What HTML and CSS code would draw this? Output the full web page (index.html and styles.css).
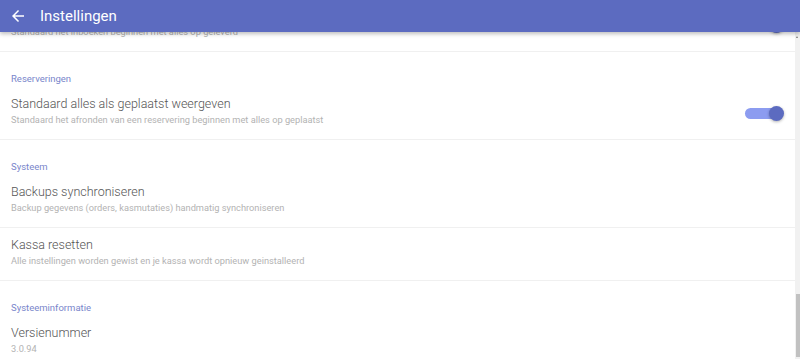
FILE: index.html
```html
<!DOCTYPE html>
<html lang="nl">
  <head>
    <meta charset="utf-8" />
    <link rel="stylesheet" href="styles.css">
    <title>Instellingen</title>
  </head>
  <body>
    <header class="toolbar">
      <svg class="back" viewBox="0 0 24 24" width="18" height="18">
        <path fill="#fff" d="M20 11H7.83l5.59-5.59L12 4l-8 8 8 8 1.41-1.41L7.83 13H20v-2z" />
      </svg>
      <div class="toolbar-title">Instellingen</div>
    </header>

    <div class="page">
      <main class="content" id="content">
        <div class="section">Algemeen</div>
        <div class="item"><div class="text"><div class="title">Taal</div><div class="sub">Nederlands</div></div></div>
        <div class="item"><div class="text"><div class="title">Donkere modus</div><div class="sub">Gebruik een donker thema voor de kassa</div></div><span class="switch"></span></div>
        <div class="item"><div class="text"><div class="title">Geluid bij scannen</div><div class="sub">Speel een geluid af bij het scannen van een product</div></div><span class="switch"></span></div>
        <div class="item"><div class="text"><div class="title">Scherm vergrendelen</div><div class="sub">Vergrendel de kassa na 5 minuten inactiviteit</div></div><span class="switch off"></span></div>

        <div class="section">Kassa</div>
        <div class="item"><div class="text"><div class="title">Bon printen</div><div class="sub">Automatisch een bon printen na elke betaling</div></div><span class="switch"></span></div>
        <div class="item"><div class="text"><div class="title">Standaard betaalmethode</div><div class="sub">Pin</div></div></div>
        <div class="item"><div class="text"><div class="title">Klantenscherm</div><div class="sub">Toon de bestelling op een tweede scherm</div></div><span class="switch off"></span></div>
        <div class="item"><div class="text"><div class="title">Kassalade openen</div><div class="sub">Open de kassalade bij contante betalingen</div></div><span class="switch"></span></div>
        <div class="item"><div class="text"><div class="title">Fooi vragen</div><div class="sub">Vraag de klant om een fooi bij het afrekenen</div></div><span class="switch off"></span></div>

        <div class="section">Printer</div>
        <div class="item"><div class="text"><div class="title">Bonprinter</div><div class="sub">Geen printer gekoppeld</div></div></div>
        <div class="item"><div class="text"><div class="title">Keukenprinter</div><div class="sub">Geen printer gekoppeld</div></div></div>
        <div class="item"><div class="text"><div class="title">Logo op bon</div><div class="sub">Print het logo bovenaan de bon</div></div><span class="switch"></span></div>
        <div class="item"><div class="text"><div class="title">Aantal kopie&euml;n</div><div class="sub">1</div></div></div>

        <div class="section">Betalingen</div>
        <div class="item"><div class="text"><div class="title">Pinterminal</div><div class="sub">Koppel een pinterminal aan de kassa</div></div></div>
        <div class="item"><div class="text"><div class="title">Contant afronden</div><div class="sub">Rond contante bedragen af op 5 cent</div></div><span class="switch"></span></div>
        <div class="item"><div class="text"><div class="title">Cadeaubonnen</div><div class="sub">Cadeaubonnen accepteren als betaalmethode</div></div><span class="switch off"></span></div>
        <div class="item"><div class="text"><div class="title">Retouren</div><div class="sub">Retouren toestaan zonder bon</div></div><span class="switch off"></span></div>

        <div class="section">Producten</div>
        <div class="item"><div class="text"><div class="title">Voorraad bijhouden</div><div class="sub">Voorraad verlagen bij elke verkoop</div></div><span class="switch"></span></div>
        <div class="item"><div class="text"><div class="title">Lage voorraad melding</div><div class="sub">Toon een melding als de voorraad laag is</div></div><span class="switch"></span></div>
        <div class="item"><div class="text"><div class="title">Productafbeeldingen</div><div class="sub">Afbeeldingen tonen in het kassascherm</div></div><span class="switch off"></span></div>

        <div class="section">Inkoop</div>
        <div class="item"><div class="text"><div class="title">Automatisch bestellen</div><div class="sub">Bestellingen aanmaken bij lage voorraad</div></div><span class="switch off"></span></div>
        <div class="item"><div class="text"><div class="title">Standaard alles als geleverd weergeven</div><div class="sub">Standaard het inboeken beginnen met alles op geleverd</div></div><span class="switch"></span></div>

        <div class="section">Reserveringen</div>
        <div class="item"><div class="text"><div class="title">Standaard alles als geplaatst weergeven</div><div class="sub">Standaard het afronden van een reservering beginnen met alles op geplaatst</div></div><span class="switch"></span></div>

        <div class="section">Systeem</div>
        <div class="item"><div class="text"><div class="title">Backups synchroniseren</div><div class="sub">Backup gegevens (orders, kasmutaties) handmatig synchroniseren</div></div></div>
        <div class="item"><div class="text"><div class="title">Kassa resetten</div><div class="sub">Alle instellingen worden gewist en je kassa wordt opnieuw geinstalleerd</div></div></div>

        <div class="section">Systeeminformatie</div>
        <div class="item"><div class="text"><div class="title">Versienummer</div><div class="sub">3.0.94</div></div></div>
      </main>
      <div class="scrollbar"><div class="thumb" id="thumb"></div></div>
    </div>

    <script>
      const content = document.getElementById("content");
      const thumb = document.getElementById("thumb");
      content.scrollTop = content.scrollHeight - content.clientHeight - 10;
      const track = content.clientHeight;
      thumb.style.height = (track * track) / content.scrollHeight + "px";
      thumb.style.top = (content.scrollTop / content.scrollHeight) * track + "px";
    </script>
  </body>
</html>
```

FILE: styles.css
```css
html,
body {
  height: 100%;
}
body {
  margin: 0;
  display: flex;
  flex-direction: column;
  font-family: Roboto, "Noto Sans", sans-serif;
  background: #fff;
  overflow: hidden;
}
.toolbar {
  flex: 0 0 32px;
  display: flex;
  align-items: center;
  background: #5c6bc0;
  color: #fff;
  box-shadow: 0 2px 4px rgba(0, 0, 0, 0.25);
  position: relative;
  z-index: 2;
}
.back {
  margin-left: 9px;
  margin-right: 13px;
}
.toolbar-title {
  font-size: 15px;
}
.page {
  flex: 1;
  display: flex;
  min-height: 0;
}
.content {
  flex: 1;
  overflow-y: auto;
  scrollbar-width: none;
}
.content::-webkit-scrollbar {
  display: none;
}
.scrollbar {
  position: relative;
  width: 5px;
  background: #f1f1f1;
}
.scrollbar::before {
  content: "";
  position: absolute;
  top: 4px;
  left: 1px;
  border-left: 1.5px solid transparent;
  border-right: 1.5px solid transparent;
  border-bottom: 2px solid #777;
}
.thumb {
  position: absolute;
  left: 1px;
  right: 0;
  background: #c1c1c1;
}
.section {
  padding: 20px 11px 1px;
  font-size: 9.5px;
  line-height: 14px;
  color: #7986cb;
}
.item {
  display: flex;
  align-items: center;
  padding: 8px 11px 12px;
  border-bottom: 1px solid #f0f0f0;
}
.text {
  flex: 1;
}
.title {
  font-size: 12.5px;
  font-weight: 300;
  line-height: 18px;
  color: #555;
}
.sub {
  font-size: 9.25px;
  line-height: 14px;
  color: #b3b3b3;
}
.switch {
  position: relative;
  width: 39px;
  height: 15px;
  margin-top: 4px;
}
.switch::before {
  content: "";
  position: absolute;
  left: 0;
  right: 2px;
  top: 2px;
  height: 11px;
  border-radius: 6px;
  background: #8c9cf0;
}
.switch::after {
  content: "";
  position: absolute;
  right: 0;
  top: 0;
  width: 15px;
  height: 15px;
  border-radius: 50%;
  background: #5c6bc0;
  box-shadow: 0 1px 3px rgba(0, 0, 0, 0.3);
}
.switch.off::before {
  background: #bdbdbd;
}
.switch.off::after {
  left: 0;
  background: #f5f5f5;
}
```
